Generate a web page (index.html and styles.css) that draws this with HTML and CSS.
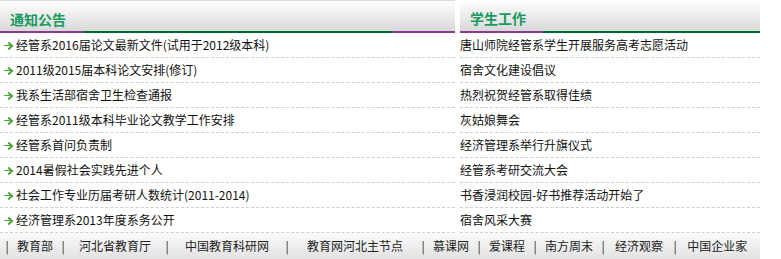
FILE: index.html
```html
<!DOCTYPE html>
<html lang="zh-CN">
<head>
    <meta charset="UTF-8">
    <title>通知公告 - 学生工作</title>
    <link rel="stylesheet" href="styles.css">
</head>
<body>
    <div class="page">
        <div class="columns">
            <div class="box box-left">
                <div class="box-head top-dash"><h2>通知公告</h2></div>
                <div class="bar bar-left"></div>
                <ul class="news">
                    <li><span class="arrow"></span><a href="#">经管系2016届论文最新文件(试用于2012级本科)</a></li>
                    <li><span class="arrow"></span><a href="#">2011级2015届本科论文安排(修订)</a></li>
                    <li><span class="arrow"></span><a href="#">我系生活部宿舍卫生检查通报</a></li>
                    <li><span class="arrow"></span><a href="#">经管系2011级本科毕业论文教学工作安排</a></li>
                    <li><span class="arrow"></span><a href="#">经管系首问负责制</a></li>
                    <li><span class="arrow"></span><a href="#">2014暑假社会实践先进个人</a></li>
                    <li><span class="arrow"></span><a href="#">社会工作专业历届考研人数统计(2011-2014)</a></li>
                    <li><span class="arrow"></span><a href="#">经济管理系2013年度系务公开</a></li>
                </ul>
            </div>

            <div class="box box-right">
                <div class="box-head"><h2>学生工作</h2></div>
                <div class="bar bar-right"></div>
                <ul class="news plain">
                    <li><a href="#">唐山师院经管系学生开展服务高考志愿活动</a></li>
                    <li><a href="#">宿舍文化建设倡议</a></li>
                    <li><a href="#">热烈祝贺经管系取得佳绩</a></li>
                    <li><a href="#">灰姑娘舞会</a></li>
                    <li><a href="#">经济管理系举行升旗仪式</a></li>
                    <li><a href="#">经管系考研交流大会</a></li>
                    <li><a href="#">书香浸润校园-好书推荐活动开始了</a></li>
                    <li><a href="#">宿舍风采大赛</a></li>
                </ul>
            </div>
        </div>

        <div class="links">
            <span class="sep">|</span>
            <a href="#">教育部</a>
            <span class="sep">|</span>
            <a href="#" class="pad-m">河北省教育厅</a>
            <span class="sep">|</span>
            <a href="#" class="pad-l">中国教育科研网</a>
            <span class="sep">|</span>
            <a href="#" class="pad-xl">教育网河北主节点</a>
            <span class="sep">|</span>
            <a href="#">慕课网</a>
            <span class="sep">|</span>
            <a href="#">爱课程</a>
            <span class="sep">|</span>
            <a href="#">南方周末</a>
            <span class="sep">|</span>
            <a href="#" class="pad-s">经济观察</a>
            <span class="sep">|</span>
            <a href="#" class="pad-s">中国企业家</a>
        </div>
    </div>
</body>
</html>
```

FILE: styles.css
```css
body {
    margin: 0;
    padding: 0;
    font-family: "Noto Sans CJK SC", "Liberation Sans", sans-serif;
    font-size: 12px;
    color: #111;
    background: #fff;
}

a {
    color: #111;
    text-decoration: none;
}

.page {
    width: 760px;
}

.columns {
    display: flex;
    gap: 5px;
}

.box-left {
    width: 455px;
}

.box-right {
    width: 300px;
}

.box-head {
    height: 26px;
    padding-top: 5px;
    background: linear-gradient(#ffffff, #d9d9d9);
}

.box-head.top-dash {
    height: 25px;
    border-top: 1px dashed #d8d8d8;
}

.box-head h2 {
    margin: 0;
    padding-left: 10px;
    font-size: 14px;
    line-height: 26px;
    font-weight: bold;
    color: #1a9960;
}

.bar {
    height: 2px;
}

/* 紫绿相间的下边框 */
.bar-left {
    background: linear-gradient(to right, #8a3a8f 0, #8a3a8f 83px, #006b35 83px, #006b35 392px, #8a3a8f 392px);
}

.bar-right {
    background: linear-gradient(to right, #8a3a8f 0, #8a3a8f 83px, #006b35 83px);
}

.news {
    list-style: none;
    margin: 0;
    padding: 0;
}

.news li {
    display: flex;
    align-items: center;
    height: 24px;
    border-bottom: 1px dashed #cfcfcf;
    line-height: 24px;
    white-space: nowrap;
}

.news .arrow {
    position: relative;
    width: 8px;
    height: 7px;
    margin: 0 4px 0 4px;
}

.news .arrow::before {
    content: "";
    position: absolute;
    left: 0;
    top: 3px;
    width: 6px;
    height: 1px;
    background: #4fa63a;
}

.news .arrow::after {
    content: "";
    position: absolute;
    left: 2px;
    top: 1px;
    width: 4px;
    height: 4px;
    border-top: 2px solid #4fa63a;
    border-right: 2px solid #4fa63a;
    transform: rotate(45deg);
}

.links {
    display: flex;
    align-items: center;
    gap: 8px;
    height: 26px;
    padding-left: 5px;
    background: linear-gradient(#fbfbfb, #e2e2e2);
    line-height: 26px;
    white-space: nowrap;
}

.links .sep {
    width: 4px;
    text-align: center;
    color: #222;
}

.links a {
    color: #222;
}

.links .pad-s {
    padding: 0 2px;
}

.links .pad-m {
    padding: 0 6px;
}

.links .pad-l {
    padding: 0 8px;
}

.links .pad-xl {
    padding: 0 10px;
}
```
